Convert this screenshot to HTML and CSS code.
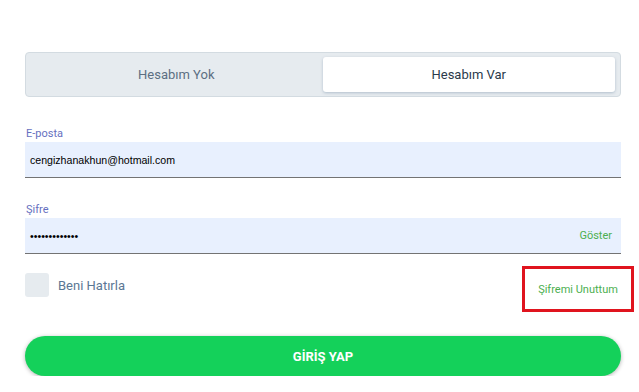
FILE: index.html
```html
<!DOCTYPE html>
<html lang="tr">
<head>
    <meta charset="UTF-8">
    <meta name="viewport" content="width=device-width, initial-scale=1.0">
    <title>Giriş Yap</title>
    <link rel="stylesheet" href="styles.css">
</head>
<body>
    <div class="login">
        <div class="tabs">
            <div class="tab">Hesabım Yok</div>
            <div class="tab active">Hesabım Var</div>
        </div>

        <div class="field">
            <label class="label">E-posta</label>
            <div class="input">cengizhanakhun@hotmail.com</div>
        </div>

        <div class="field">
            <label class="label">Şifre</label>
            <div class="input">
                <span class="dots">•••••••••••••</span>
                <span class="show">Göster</span>
            </div>
        </div>

        <div class="options">
            <label class="remember"><span class="check"></span>Beni Hatırla</label>
            <a class="forgot">Şifremi Unuttum</a>
        </div>

        <button class="submit">GİRİŞ YAP</button>
    </div>
</body>
</html>
```

FILE: styles.css
```css
body {
    margin: 0;
    font-family: Roboto, "Noto Sans", sans-serif;
    background: #fff;
}
.login {
    width: 596px;
    margin-left: 25px;
    padding-top: 52px;
}
.tabs {
    display: flex;
    height: 45px;
    box-sizing: border-box;
    padding: 4px 5px 4px 4px;
    background-color: #e6ebef;
    border: 1px solid #d3dbe1;
    border-radius: 4px;
}
.tab {
    flex: 1;
    display: flex;
    align-items: center;
    justify-content: center;
    font-size: 13px;
    color: #5c6f82;
}
.tab.active {
    background: #fff;
    color: #2a3a4b;
    border-radius: 3px;
    box-shadow: 0 1px 3px rgba(80, 110, 140, 0.35);
}
.field {
    margin-top: 30px;
}
.field + .field {
    margin-top: 25px;
}
.label {
    display: block;
    font-size: 11px;
    color: #6670c0;
    padding-left: 1px;
    margin-bottom: 2px;
}
.input {
    display: flex;
    align-items: center;
    justify-content: space-between;
    height: 35px;
    padding: 0 9px 0 5px;
    background: #e8f0fe;
    border-bottom: 1px solid #737373;
    font-family: "Liberation Sans", Arial, sans-serif;
    font-size: 10.6px;
    color: #000;
}
.dots {
    font-size: 10.6px;
}
.show {
    font-family: Roboto, sans-serif;
    font-size: 11px;
    color: #4caf50;
}
.options {
    display: flex;
    align-items: flex-start;
    justify-content: space-between;
    margin-top: 12px;
    margin-right: -13px;
}
.remember {
    display: flex;
    align-items: center;
    margin-top: 7px;
    font-size: 13px;
    color: #5b7794;
}
.check {
    width: 24px;
    height: 24px;
    margin-right: 9px;
    background: #e6ebef;
    border-radius: 3px;
}
.forgot {
    display: flex;
    align-items: center;
    justify-content: center;
    width: 106px;
    height: 40px;
    border: 3px solid #e0141e;
    font-size: 11px;
    color: #4caf50;
}
.submit {
    display: block;
    width: 100%;
    height: 40px;
    margin-top: 24px;
    border: none;
    border-radius: 20px;
    background: #14d15a;
    color: #fff;
    font-family: Roboto, sans-serif;
    font-weight: bold;
    font-size: 13px;
    box-shadow: 0 1px 4px rgba(0, 0, 0, 0.3);
}
```
